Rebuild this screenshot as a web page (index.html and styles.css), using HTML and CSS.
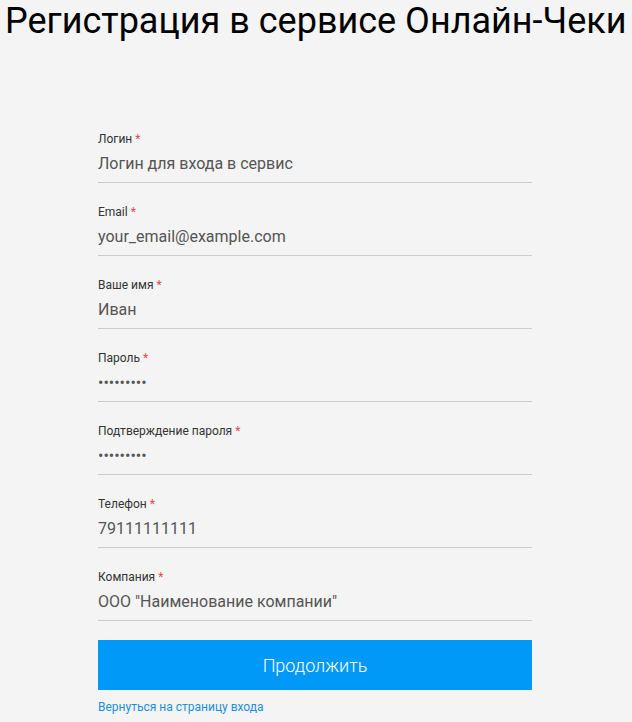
FILE: index.html
```html
<!DOCTYPE html>
<html lang="ru">
<head>
  <meta charset="UTF-8">
  <title>Регистрация в сервисе Онлайн-Чеки</title>
  <link rel="stylesheet" href="styles.css">
</head>
<body>
  <h1 class="title">Регистрация в сервисе Онлайн-Чеки</h1>

  <form class="reg-form">
    <div class="field">
      <label class="field-label">Логин <span class="req">*</span></label>
      <input class="field-input" type="text" placeholder="Логин для входа в сервис">
    </div>
    <div class="field">
      <label class="field-label">Email <span class="req">*</span></label>
      <input class="field-input" type="text" placeholder="your_email@example.com">
    </div>
    <div class="field">
      <label class="field-label">Ваше имя <span class="req">*</span></label>
      <input class="field-input" type="text" placeholder="Иван">
    </div>
    <div class="field">
      <label class="field-label">Пароль <span class="req">*</span></label>
      <input class="field-input" type="password" value="123456789">
    </div>
    <div class="field">
      <label class="field-label">Подтверждение пароля <span class="req">*</span></label>
      <input class="field-input" type="password" value="123456789">
    </div>
    <div class="field">
      <label class="field-label">Телефон <span class="req">*</span></label>
      <input class="field-input" type="text" placeholder="79111111111">
    </div>
    <div class="field">
      <label class="field-label">Компания <span class="req">*</span></label>
      <input class="field-input" type="text" placeholder='ООО "Наименование компании"'>
    </div>

    <button class="submit" type="button">Продолжить</button>
    <a class="back-link" href="#">Вернуться на страницу входа</a>
  </form>
</body>
</html>
```

FILE: styles.css
```css
* {
  margin: 0;
  padding: 0;
  box-sizing: border-box;
  font-family: Roboto, sans-serif;
}

body {
  background: #f4f4f4;
  min-height: 100vh;
}

.title {
  font-size: 36px;
  font-weight: 400;
  color: #000;
  padding-left: 5px;
  white-space: nowrap;
}

.reg-form {
  width: 434px;
  margin: 89px 0 0 98px;
  display: flex;
  flex-direction: column;
}

.field {
  display: flex;
  flex-direction: column;
  margin-bottom: 21px;
}

.field-label {
  font-size: 12px;
  line-height: 16px;
  color: #333;
}

.req {
  color: #e04b4b;
}

.field-input {
  height: 36px;
  padding-bottom: 2px;
  border: none;
  border-bottom: 1px solid #ccc;
  background: transparent;
  font-size: 16px;
  color: #555;
  outline: none;
}

.field-input::placeholder {
  color: #555;
  opacity: 1;
}

.submit {
  height: 50px;
  margin-top: -2px;
  border: none;
  background: #0099f7;
  color: #fff;
  font-size: 18px;
  font-weight: 300;
  cursor: pointer;
}

.back-link {
  margin-top: 10px;
  font-size: 12px;
  color: #1a8fe0;
  text-decoration: none;
}
```
